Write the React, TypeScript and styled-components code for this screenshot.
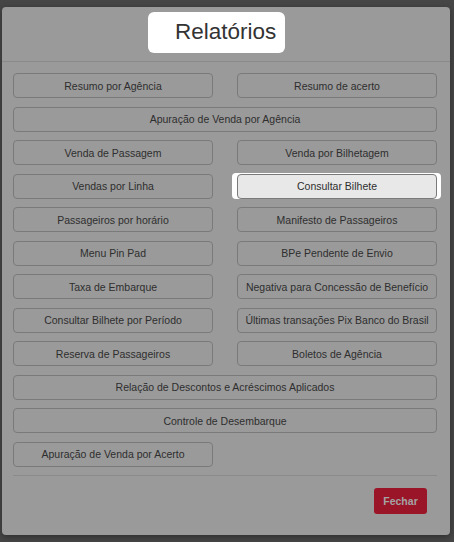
import React from "react";
import styled, { createGlobalStyle } from "styled-components";

const Global = createGlobalStyle`
  html, body { margin: 0; padding: 0; background: #464646; }
  body { font-family: "Liberation Sans", Arial, sans-serif; }
  * { box-sizing: border-box; }
`;

const Page = styled.div`
  width: 454px;
  height: 542px;
  padding: 7px 4px 7px 2px;
`;

const Dialog = styled.div`
  width: 448px;
  height: 528px;
  background: #9a9a9a;
  border-radius: 4px;
  box-shadow: 0 2px 6px rgba(0, 0, 0, 0.35);
  display: flex;
  flex-direction: column;
`;

const Header = styled.div`
  height: 55px;
  padding: 5px 0 0 146px;
  border-bottom: 1px solid #8a8a8a;
`;

const TitleBox = styled.div`
  width: 137px;
  height: 41px;
  background: #ffffff;
  border-radius: 6px;
  padding: 6px 0 0 27px;
  font-size: 22.5px;
  color: #333333;
  line-height: 28px;
`;

const Body = styled.div`
  padding: 11px 13px 0 11px;
`;

const Grid = styled.div`
  display: grid;
  grid-template-columns: 200px 200px;
  column-gap: 24px;
  row-gap: 8.5px;
`;

const Btn = styled.button<{ $full?: boolean; $active?: boolean }>`
  grid-column: ${(p) => (p.$full ? "1 / -1" : "auto")};
  height: 25px;
  width: 100%;
  background: ${(p) => (p.$active ? "#e8e8e8" : "transparent")};
  border: 1px solid #7a7a7a;
  border-radius: 4px;
  font-family: "Liberation Sans", Arial, sans-serif;
  font-size: 10.5px;
  color: #2e2e2e;
  padding: 0;
  white-space: nowrap;
  cursor: pointer;
`;

const Highlight = styled.div`
  margin: -0.5px -4px -0.5px -5px;
  padding: 0.5px 4px 0.5px 5px;
  background: #ffffff;
  border-radius: 4px;
  display: flex;
`;

const Divider = styled.div`
  height: 1px;
  background: #8a8a8a;
  margin-top: 8px;
`;

const Footer = styled.div`
  display: flex;
  justify-content: flex-end;
  padding: 12px 10px 0 0;
`;

const Close = styled.button`
  width: 53px;
  height: 26px;
  background: #9b1529;
  border: none;
  border-radius: 3px;
  color: #a4a4a4;
  font-family: "Liberation Sans", Arial, sans-serif;
  font-size: 10.5px;
  font-weight: bold;
  padding: 0;
`;

type Item = { label: string; full?: boolean; active?: boolean };

const items: Item[] = [
  { label: "Resumo por Agência" },
  { label: "Resumo de acerto" },
  { label: "Apuração de Venda por Agência", full: true },
  { label: "Venda de Passagem" },
  { label: "Venda por Bilhetagem" },
  { label: "Vendas por Linha" },
  { label: "Consultar Bilhete", active: true },
  { label: "Passageiros por horário" },
  { label: "Manifesto de Passageiros" },
  { label: "Menu Pin Pad" },
  { label: "BPe Pendente de Envio" },
  { label: "Taxa de Embarque" },
  { label: "Negativa para Concessão de Benefício" },
  { label: "Consultar Bilhete por Período" },
  { label: "Últimas transações Pix Banco do Brasil" },
  { label: "Reserva de Passageiros" },
  { label: "Boletos de Agência" },
  { label: "Relação de Descontos e Acréscimos Aplicados", full: true },
  { label: "Controle de Desembarque", full: true },
  { label: "Apuração de Venda por Acerto" },
];

export default function App() {
  return (
    <>
      <Global />
      <Page>
        <Dialog>
          <Header>
            <TitleBox>Relatórios</TitleBox>
          </Header>
          <Body>
            <Grid>
              {items.map((it) =>
                it.active ? (
                  <Highlight key={it.label}>
                    <Btn $active>{it.label}</Btn>
                  </Highlight>
                ) : (
                  <Btn key={it.label} $full={it.full}>
                    {it.label}
                  </Btn>
                )
              )}
            </Grid>
            <Divider />
            <Footer>
              <Close>Fechar</Close>
            </Footer>
          </Body>
        </Dialog>
      </Page>
    </>
  );
}
